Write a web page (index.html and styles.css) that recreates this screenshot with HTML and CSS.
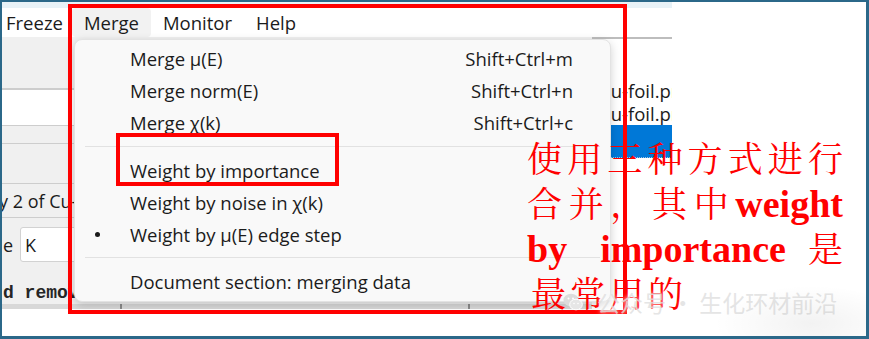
FILE: index.html
```html
<!DOCTYPE html>
<html>
<head>
<meta charset="utf-8">
<link rel="stylesheet" href="styles.css">
</head>
<body>
<div class="page">
  <div class="app">
    <div class="titlestrip"></div>
    <div class="menubar">
      <span class="mb-item first">Freeze</span>
      <span class="mb-item active">Merge</span>
      <span class="mb-item">Monitor</span>
      <span class="mb-item">Help</span>
    </div>
    <div class="work">
      <div class="leftpane">
        <div class="band band1"></div>
        <div class="listbox"></div>
        <div class="band band2"></div>
        <div class="band band3"></div>
        <div class="caption">y 2 of Cu-foil.prj</div>
        <div class="formrow"><span class="lbl">e</span><span class="input">K</span></div>
        <div class="console">d removed</div>
        <div class="hscroll"><span class="tick t1"></span><span class="tick t2"></span></div>
      </div>
      <div class="rightpane">
        <div class="file">Cu-foil.prj</div>
        <div class="file">Cu-foil.prj</div>
        <div class="file selected"></div>
      </div>
    </div>
  </div>

  <div class="menu">
    <div class="item"><span class="mark"></span><span class="label">Merge μ(E)</span><span class="key">Shift+Ctrl+m</span></div>
    <div class="item"><span class="mark"></span><span class="label">Merge norm(E)</span><span class="key">Shift+Ctrl+n</span></div>
    <div class="item"><span class="mark"></span><span class="label">Merge χ(k)</span><span class="key">Shift+Ctrl+c</span></div>
    <div class="sep"></div>
    <div class="item"><span class="mark"></span><span class="label">Weight by importance</span><span class="key"></span></div>
    <div class="item"><span class="mark"></span><span class="label">Weight by noise in χ(k)</span><span class="key"></span></div>
    <div class="item"><span class="mark"><span class="dot"></span></span><span class="label">Weight by μ(E) edge step</span><span class="key"></span></div>
    <div class="sep sep2"></div>
    <div class="item"><span class="mark"></span><span class="label">Document section: merging data</span><span class="key"></span></div>
  </div>

  <div class="redbox big"></div>
  <div class="redbox small"></div>

  <div class="note">
    <div class="nl l1"><span>使</span><span>用</span><span>三</span><span>种</span><span>方</span><span>式</span><span>进</span><span>行</span></div>
    <div class="nl l2"><span>合</span><span>并</span><span>，</span><span>其</span><span>中</span><span class="en">weight</span></div>
    <div class="nl l3"><span class="en">by</span><span class="en imp">importance</span><span class="last">是</span></div>
    <div class="nl l4">最常用的</div>
  </div>

  <div class="watermark">
    <svg class="wm-icon" width="20" height="18" viewBox="0 0 20 18">
      <ellipse cx="8" cy="7" rx="7.5" ry="6.3" fill="#dcdcdc"/>
      <ellipse cx="13" cy="11.5" rx="6.3" ry="5.3" fill="#e6e6e6" stroke="#fff" stroke-width="1"/>
      <circle cx="5.5" cy="5.5" r="1" fill="#fff"/>
      <circle cx="10" cy="5.5" r="1" fill="#fff"/>
      <circle cx="11" cy="10.5" r="0.8" fill="#fff"/>
      <circle cx="15" cy="10.5" r="0.8" fill="#fff"/>
    </svg>
    <span class="wm-text">公众号 · 生化环材前沿</span>
  </div>
</div>
</body>
</html>
```

FILE: styles.css
```css
* { box-sizing: border-box; }
html, body { margin: 0; padding: 0; background: #ffffff; }

.page {
  position: relative;
  width: 869px;
  height: 339px;
  border-style: solid;
  border-color: #2b6889;
  border-width: 2px 3px 3px 2px;
  background: #ffffff;
  overflow: hidden;
  font-family: "Open Sans", "Noto Sans", sans-serif;
  color: #1b1b1b;
}

/* ---------- application behind the menu ---------- */
.app {
  width: 670px;
  height: 307px;
  display: flex;
  flex-direction: column;
}
.titlestrip { height: 6px; background: #e8f2f7; }
.menubar {
  height: 29px;
  display: flex;
  align-items: stretch;
  background: #ffffff;
  font-size: 18.5px;
}
.mb-item {
  display: flex;
  align-items: center;
  padding: 0 12px;
  border-radius: 4px;
}
.mb-item.first { padding-left: 4px; padding-right: 9px; }
.mb-item.active { background: #f2f2f2; }

.work { flex: 1; display: flex; }
.leftpane {
  width: 590px;
  flex: none;
  display: flex;
  flex-direction: column;
  background: #f0f0f0;
}
.band { background: #f0f0f0; border-bottom: 1px solid #cdcdcd; }
.band1 { height: 53px; border-bottom-width: 2px; }
.listbox { height: 36px; background: #ffffff; border-bottom: 1px solid #cdcdcd; }
.band2 { height: 18px; }
.band3 { height: 40px; }
.caption {
  height: 34px;
  border-bottom: 1px solid #cdcdcd;
  display: flex;
  align-items: center;
  font-size: 18px;
  text-indent: -3px;
  white-space: nowrap;
  overflow: hidden;
}
.formrow {
  height: 60px;
  display: flex;
  align-items: flex-start;
  padding-top: 9px;
  font-size: 18px;
}
.lbl { width: 18px; padding-left: 1px; padding-top: 6px; }
.input {
  width: 120px;
  height: 35px;
  background: #ffffff;
  border: 1px solid #d2d2d2;
  border-radius: 3px;
  padding-left: 4px;
  display: flex;
  align-items: center;
}
.console {
  height: 26px;
  padding-top: 4px;
  font-family: "Liberation Mono", monospace;
  font-weight: bold;
  font-size: 18px;
  line-height: 22px;
  color: #262626;
  padding-left: 1px;
  white-space: nowrap;
  overflow: hidden;
}
.hscroll {
  flex: 1;
  background: #d8d8d8;
  position: relative;
}
.tick { position: absolute; top: 0; width: 2px; height: 5px; background: #8a8a8a; }
.t1 { left: 118px; }
.t2 { left: 466px; }

.rightpane {
  flex: 1;
  min-width: 0;
  background: #ffffff;
  border-top: 2px solid #bdbdbd;
  padding-top: 40px;
  font-size: 18.5px;
  overflow: hidden;
}
.file {
  height: 23px;
  line-height: 23px;
  padding-left: 7px;
  white-space: nowrap;
  overflow: hidden;
}
.file.selected {
  height: 33px;
  background: #0078d7;
  border-bottom: 1px dotted #9ac2e6;
}

/* ---------- dropdown menu ---------- */
.menu {
  position: absolute;
  left: 72px;
  top: 37px;
  width: 537px;
  height: 263px;
  background: #f9f9f9;
  border: 1px solid #e3e3e3;
  border-radius: 8px;
  box-shadow: 0 3px 10px rgba(0, 0, 0, 0.18);
  padding: 2px 0 4px;
  font-size: 18.5px;
  color: #1b1b1b;
}
.item {
  height: 32px;
  display: grid;
  grid-template-columns: 55px 1fr auto;
  align-items: center;
  padding-right: 37px;
}
.mark { display: flex; align-items: center; }
.dot {
  width: 5px;
  height: 5px;
  border-radius: 50%;
  background: #1b1b1b;
  margin-left: 20px;
}
.sep {
  height: 16px;
  margin: 0 10px;
  background: linear-gradient(#e2e2e2, #e2e2e2) center / 100% 1px no-repeat;
}
.sep2 { height: 15px; }

/* ---------- annotation overlays ---------- */
.redbox {
  position: absolute;
  border: 4px solid #ff0000;
}
.redbox.big { left: 66px; top: 2px; width: 559px; height: 310px; }
.redbox.small { left: 114px; top: 131px; width: 223px; height: 53px; }

.note {
  position: absolute;
  left: 525px;
  top: 133px;
  width: 316px;
  color: #ff0000;
  font-family: "Noto Serif CJK SC", "Noto Sans CJK SC", serif;
  font-size: 35px;
}
.nl {
  height: 45px;
  line-height: 45px;
  display: flex;
  justify-content: space-between;
  align-items: baseline;
  white-space: nowrap;
}
.en {
  font-family: "Liberation Serif", serif;
  font-weight: bold;
  font-size: 38px;
}
.l3 { justify-content: flex-start; }
.l3 .imp { margin-left: 33px; }
.l3 .last { margin-left: auto; }
.l4 { display: block; letter-spacing: 4px; padding-left: 4px; }

.watermark {
  position: absolute;
  left: 561px;
  top: 283px;
  display: flex;
  align-items: center;
  gap: 14px;
  color: rgba(222, 222, 222, 0.8);
  font-family: "Noto Sans CJK SC", sans-serif;
  font-size: 23px;
  text-shadow: 0 0 4px #ffffff;
  white-space: nowrap;
}
.watermark::after {
  content: "";
  position: absolute;
  left: 150px;
  right: -40px;
  top: 0;
  bottom: -30px;
  background: radial-gradient(ellipse at 60% 60%, rgba(0, 0, 0, 0.05), rgba(0, 0, 0, 0) 70%);
  pointer-events: none;
}
.wm-icon { flex: none; }
```
